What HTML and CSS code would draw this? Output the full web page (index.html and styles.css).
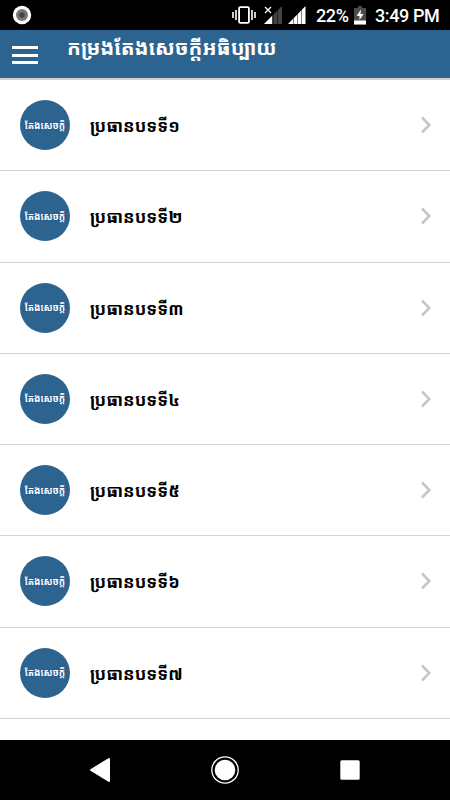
FILE: index.html
```html
<!DOCTYPE html>
<html lang="km">
<head>
    <meta charset="utf-8">
    <title>កម្រងតែងសេចក្តីអធិប្បាយ</title>
    <link rel="stylesheet" href="styles.css">
</head>
<body>
    <div class="status-bar">
        <svg class="record" width="20" height="20" viewBox="0 0 20 20">
            <circle cx="10" cy="10" r="9.2" fill="#fff"/>
            <circle cx="10" cy="10" r="6" fill="#777"/>
            <circle cx="10" cy="10" r="2.8" fill="#444"/>
        </svg>
        <svg class="signals" width="76" height="20" viewBox="0 0 76 20">
            <!-- vibrate -->
            <rect x="7.1" y="2.1" width="9.8" height="15.8" rx="1.2" fill="none" stroke="#fff" stroke-width="1.8"/>
            <path d="M1 7v6M4 5v10M20 5v10M23 7v6" stroke="#fff" stroke-width="1.6"/>
            <!-- sim 1, no service -->
            <path d="M32 19 50 1v18z" fill="#444"/>
            <path d="M32 19l8-8v8z" fill="#fff"/>
            <path d="M33 2l6 6M39 2l-6 6" stroke="#fff" stroke-width="1.3"/>
            <path d="M41.500 9v10M45.500 5v14" stroke="#000" stroke-width=".5"/>
            <!-- sim 2 -->
            <path d="M56 19 73.500 1v18z" fill="#fff"/>
            <path d="M61.500 10v9M65.500 7v12M69.500 4v15" stroke="#000" stroke-width=".5"/>
        </svg>
        <span class="percent">22%</span>
        <svg class="battery" width="12" height="19" viewBox="0 0 12 19">
            <path d="M4 0h4v2h4v16.500H0V2h4z" fill="#4a4a4a"/>
            <path d="M0 14.500h12v4H0z" fill="#fff"/>
            <path d="M7 3.500 2.500 10H5.500v4L9.500 8H6.500z" fill="#fff"/>
        </svg>
        <span class="clock">3:49 PM</span>
    </div>

    <div class="header">
        <div class="menu"><i></i><i></i><i></i></div>
        <h1 class="title">កម្រងតែងសេចក្តីអធិប្បាយ</h1>
    </div>

    <ul class="list" id="list"></ul>

    <div class="nav-bar">
        <svg width="22" height="26" viewBox="0 0 22 26"><path d="M2 13 20 2v22z" fill="#fff" stroke="#fff" stroke-width="2" stroke-linejoin="round"/></svg>
        <svg class="home" width="28" height="28" viewBox="0 0 28 28"><circle cx="14" cy="14" r="13.200" fill="none" stroke="#fff" stroke-width="1.300"/><circle cx="14" cy="14" r="10.300" fill="#fff"/></svg>
        <svg width="20" height="20" viewBox="0 0 20 20"><rect x=".3" y=".3" width="19.400" height="19.400" rx="1.500" fill="#fff"/></svg>
    </div>

<script>
const digits = ["១", "២", "៣", "៤", "៥", "៦", "៧"];

document.getElementById('list').innerHTML = digits.map(d => `
    <li class="item">
        <div class="avatar"><span>តែងសេចក្តី</span></div>
        <div class="name">ប្រធានបទទី${d}</div>
        <svg class="arrow" width="12" height="18" viewBox="0 0 12 18"><path d="M2 1.500 9.300 9 2 16.500" fill="none" stroke="#c7c7c7" stroke-width="2.600"/></svg>
    </li>`
).join('');
</script>
</body>
</html>
```
FILE: styles.css
```css
* {
    box-sizing: border-box;
}
body {
    margin: 0;
    height: 800px;
    display: flex;
    flex-direction: column;
    overflow: hidden;
    background: #fff;
    font-family: "Khmer OS Muol Light", "Noto Sans Khmer", "Noto Sans", sans-serif;
}
.status-bar {
    height: 30px;
    flex: none;
    display: flex;
    align-items: center;
    padding: 0 10px 0 12px;
    background: #000;
    color: #fff;
    font: 500 18px/30px Roboto, sans-serif;
    letter-spacing: -0.4px;
}
.signals {
    margin-left: 200px;
}
.percent {
    width: 33px;
    margin-left: 8px;
    padding-top: 1px;
    white-space: nowrap;
}
.battery {
    margin-left: 5px;
}
.clock {
    margin-left: 9px;
    padding-top: 1px;
    white-space: nowrap;
}
.status-bar svg,
.status-bar span {
    flex: none;
}
.header {
    height: 50px;
    flex: none;
    display: flex;
    padding-left: 12px;
    background: #2d638f;
    border-bottom: 2px solid #d0d0d0;
}
.menu {
    width: 26px;
    padding-top: 16px;
}
.menu i {
    display: block;
    height: 3px;
    margin-bottom: 4.5px;
    background: #fff;
}
.title {
    margin: 0 0 0 29px;
    color: #fff;
    font-size: 20.4px;
    line-height: 34px;
    white-space: nowrap;
}
.list {
    flex: 1;
    margin: 0;
    padding: 0;
    list-style: none;
}
.item {
    height: 91.25px;
    display: flex;
    align-items: center;
    padding: 0 18px 0 20px;
    border-bottom: 1.5px solid #d4d4d4;
}
.avatar {
    width: 50px;
    height: 50px;
    display: flex;
    align-items: center;
    justify-content: center;
    border-radius: 50%;
    background: #2d638f;
    color: #fff;
    font-size: 9.4px;
    font-weight: bold;
    text-shadow: 0 0 1px #0c3f86;
    white-space: nowrap;
}
.name {
    flex: 1;
    margin-left: 20px;
    padding-top: 1px;
    color: #000;
    font-size: 17.1px;
    font-weight: bold;
    white-space: nowrap;
}
.nav-bar {
    height: 60px;
    flex: none;
    display: flex;
    align-items: center;
    justify-content: space-between;
    padding: 0 90px 0 89px;
    background: #000;
}
.home {
    margin-right: 2px;
}
```
